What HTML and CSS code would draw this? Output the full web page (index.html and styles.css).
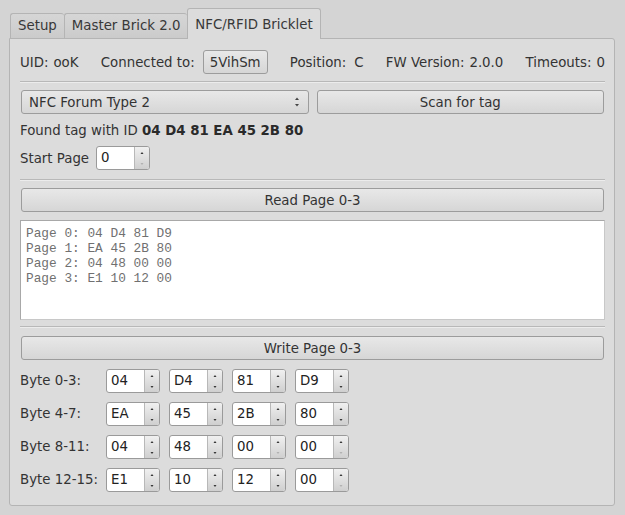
FILE: index.html
```html
<!DOCTYPE html>
<html>
<head>
<meta charset="utf-8">
<link rel="stylesheet" href="styles.css">
</head>
<body>
<div class="window">
  <div class="tabbar">
    <div class="tab">Setup</div>
    <div class="tab">Master Brick 2.0</div>
    <div class="tab active">NFC/RFID Bricklet</div>
  </div>
  <div class="pane">
    <div class="info-row">
      <div class="grp"><span>UID:</span><span>ooK</span></div>
      <div class="grp wide-gap"><span>Connected to:</span><span class="btn small">5VihSm</span></div>
      <div class="grp wide-gap"><span>Position:</span><span>C</span></div>
      <div class="grp"><span>FW Version:</span><span>2.0.0</span></div>
      <div class="grp"><span>Timeouts:</span><span>0</span></div>
    </div>
    <div class="sep first-sep"></div>
    <div class="row2">
      <div class="combo"><span>NFC Forum Type 2</span>
        <svg class="combo-arrows" width="8" height="14" viewBox="0 0 8 14"><path d="M2 5 L4 2.5 L6 5 Z" fill="#444"/><path d="M2 9 L4 11.5 L6 9 Z" fill="#444"/></svg>
      </div>
      <div class="btn">Scan for tag</div>
    </div>
    <div class="found">Found tag with ID <b>04 D4 81 EA 45 2B 80</b></div>
    <div class="start-row">
      <span>Start Page</span>
      <div class="spin"><span class="spin-val">0</span><span class="spin-btns"><svg width="14" height="22" viewBox="0 0 14 22"><path d="M5.5 7 L7 5 L8.5 7 Z" fill="#333"/><path d="M5.5 16 L7 18 L8.5 16 Z" fill="#b0b0b0"/></svg></span></div>
    </div>
    <div class="sep mid-sep"></div>
    <div class="btn full read-btn">Read Page 0-3</div>
    <div class="textarea">Page 0: 04 D4 81 D9
Page 1: EA 45 2B 80
Page 2: 04 48 00 00
Page 3: E1 10 12 00</div>
    <div class="sep low-sep"></div>
    <div class="btn full write-btn">Write Page 0-3</div>
    <div class="bytes">
      <span class="blabel">Byte 0-3:</span>
      <div class="spin"><span class="spin-val">04</span><span class="spin-btns"><svg width="14" height="22" viewBox="0 0 14 22"><path d="M5.5 7 L7 5 L8.5 7 Z" fill="#333"/><path d="M5.5 16 L7 18 L8.5 16 Z" fill="#333"/></svg></span></div>
      <div class="spin"><span class="spin-val">D4</span><span class="spin-btns"><svg width="14" height="22" viewBox="0 0 14 22"><path d="M5.5 7 L7 5 L8.5 7 Z" fill="#333"/><path d="M5.5 16 L7 18 L8.5 16 Z" fill="#333"/></svg></span></div>
      <div class="spin"><span class="spin-val">81</span><span class="spin-btns"><svg width="14" height="22" viewBox="0 0 14 22"><path d="M5.5 7 L7 5 L8.5 7 Z" fill="#333"/><path d="M5.5 16 L7 18 L8.5 16 Z" fill="#333"/></svg></span></div>
      <div class="spin"><span class="spin-val">D9</span><span class="spin-btns"><svg width="14" height="22" viewBox="0 0 14 22"><path d="M5.5 7 L7 5 L8.5 7 Z" fill="#333"/><path d="M5.5 16 L7 18 L8.5 16 Z" fill="#333"/></svg></span></div>

      <span class="blabel">Byte 4-7:</span>
      <div class="spin"><span class="spin-val">EA</span><span class="spin-btns"><svg width="14" height="22" viewBox="0 0 14 22"><path d="M5.5 7 L7 5 L8.5 7 Z" fill="#333"/><path d="M5.5 16 L7 18 L8.5 16 Z" fill="#333"/></svg></span></div>
      <div class="spin"><span class="spin-val">45</span><span class="spin-btns"><svg width="14" height="22" viewBox="0 0 14 22"><path d="M5.5 7 L7 5 L8.5 7 Z" fill="#333"/><path d="M5.5 16 L7 18 L8.5 16 Z" fill="#333"/></svg></span></div>
      <div class="spin"><span class="spin-val">2B</span><span class="spin-btns"><svg width="14" height="22" viewBox="0 0 14 22"><path d="M5.5 7 L7 5 L8.5 7 Z" fill="#333"/><path d="M5.5 16 L7 18 L8.5 16 Z" fill="#333"/></svg></span></div>
      <div class="spin"><span class="spin-val">80</span><span class="spin-btns"><svg width="14" height="22" viewBox="0 0 14 22"><path d="M5.5 7 L7 5 L8.5 7 Z" fill="#333"/><path d="M5.5 16 L7 18 L8.5 16 Z" fill="#333"/></svg></span></div>

      <span class="blabel">Byte 8-11:</span>
      <div class="spin"><span class="spin-val">04</span><span class="spin-btns"><svg width="14" height="22" viewBox="0 0 14 22"><path d="M5.5 7 L7 5 L8.5 7 Z" fill="#333"/><path d="M5.5 16 L7 18 L8.5 16 Z" fill="#333"/></svg></span></div>
      <div class="spin"><span class="spin-val">48</span><span class="spin-btns"><svg width="14" height="22" viewBox="0 0 14 22"><path d="M5.5 7 L7 5 L8.5 7 Z" fill="#333"/><path d="M5.5 16 L7 18 L8.5 16 Z" fill="#333"/></svg></span></div>
      <div class="spin"><span class="spin-val">00</span><span class="spin-btns"><svg width="14" height="22" viewBox="0 0 14 22"><path d="M5.5 7 L7 5 L8.5 7 Z" fill="#333"/><path d="M5.5 16 L7 18 L8.5 16 Z" fill="#b0b0b0"/></svg></span></div>
      <div class="spin"><span class="spin-val">00</span><span class="spin-btns"><svg width="14" height="22" viewBox="0 0 14 22"><path d="M5.5 7 L7 5 L8.5 7 Z" fill="#333"/><path d="M5.5 16 L7 18 L8.5 16 Z" fill="#b0b0b0"/></svg></span></div>

      <span class="blabel">Byte 12-15:</span>
      <div class="spin"><span class="spin-val">E1</span><span class="spin-btns"><svg width="14" height="22" viewBox="0 0 14 22"><path d="M5.5 7 L7 5 L8.5 7 Z" fill="#333"/><path d="M5.5 16 L7 18 L8.5 16 Z" fill="#333"/></svg></span></div>
      <div class="spin"><span class="spin-val">10</span><span class="spin-btns"><svg width="14" height="22" viewBox="0 0 14 22"><path d="M5.5 7 L7 5 L8.5 7 Z" fill="#333"/><path d="M5.5 16 L7 18 L8.5 16 Z" fill="#333"/></svg></span></div>
      <div class="spin"><span class="spin-val">12</span><span class="spin-btns"><svg width="14" height="22" viewBox="0 0 14 22"><path d="M5.5 7 L7 5 L8.5 7 Z" fill="#333"/><path d="M5.5 16 L7 18 L8.5 16 Z" fill="#333"/></svg></span></div>
      <div class="spin"><span class="spin-val">00</span><span class="spin-btns"><svg width="14" height="22" viewBox="0 0 14 22"><path d="M5.5 7 L7 5 L8.5 7 Z" fill="#333"/><path d="M5.5 16 L7 18 L8.5 16 Z" fill="#b0b0b0"/></svg></span></div>
    </div>
  </div>
</div>
</body>
</html>
```

FILE: styles.css
```css
html, body {
  margin: 0;
  padding: 0;
  background: #d4d4d4;
  width: 625px;
  height: 515px;
  overflow: hidden;
}
body {
  font-family: "DejaVu Sans", sans-serif;
  font-size: 13.33px;
  color: #333333;
}
.window {
  padding: 9px 10px 0 9px;
}
.tabbar {
  display: flex;
  align-items: flex-end;
  height: 29px;
  padding-left: 1px;
}
.tab {
  height: 24px;
  line-height: 24px;
  padding: 0 7px;
  background: linear-gradient(#d6d6d6, #cbcbcb);
  border: 1px solid #b4b4b4;
  border-bottom: none;
  border-right: none;
  border-radius: 3px 3px 0 0;
  color: #383838;
}
.tab.active {
  height: 30px;
  line-height: 31px;
  background: #dcdcdc;
  border-right: 1px solid #b4b4b4;
  margin-bottom: -1px;
  position: relative;
  z-index: 1;
  padding: 0 7px;
}
.pane {
  background: #dcdcdc;
  border: 1px solid #b4b4b4;
  border-radius: 0 3px 3px 3px;
  padding: 11px 9px 13px 10px;
  display: flex;
  flex-direction: column;
}
.info-row {
  display: flex;
  justify-content: space-between;
  align-items: center;
  height: 24px;
}
.grp {
  display: flex;
  align-items: center;
  gap: 5px;
}
.grp.wide-gap {
  gap: 8px;
}
.btn {
  display: flex;
  align-items: center;
  justify-content: center;
  height: 22px;
  border: 1px solid #9c9c9c;
  border-radius: 3px;
  background: linear-gradient(#e8e8e8, #d6d6d6);
  color: #333;
  box-sizing: content-box;
}
.btn.small {
  padding: 0 6px;
}
.sep {
  height: 1px;
  border-top: 1px solid #b8b8b8;
  background: #ececec;
}
.first-sep { margin-top: 7px; }
.row2 {
  margin-top: 7px;
  display: grid;
  grid-template-columns: 1fr 1fr;
  column-gap: 8px;
  height: 24px;
  padding: 0 1px;
}
.combo {
  display: flex;
  align-items: center;
  justify-content: space-between;
  height: 22px;
  padding: 0 7px 0 7px;
  border: 1px solid #9c9c9c;
  border-radius: 3px;
  background: linear-gradient(#e8e8e8, #d6d6d6);
}
.combo-arrows {
  display: block;
}
.found {
  margin-top: 8px;
  line-height: 17px;
}
.found b {
  font-weight: bold;
  color: #2a2a2a;
}
.start-row {
  margin-top: 7px;
  display: flex;
  align-items: center;
  gap: 7px;
  height: 24px;
}
.spin {
  display: flex;
  width: 52px;
  height: 22px;
  border: 1px solid #9a9a9a;
  border-radius: 3px;
  background: #ffffff;
  overflow: hidden;
}
.spin-val {
  flex: 1;
  line-height: 22px;
  padding-left: 4px;
  color: #222;
}
.spin-btns {
  width: 14px;
  border-left: 1px solid #b8b8b8;
  background: linear-gradient(#f0f0f0, #cfcfcf);
  display: flex;
}
.spin-btns svg { display: block; }
.mid-sep { margin-top: 9px; }
.read-btn { margin: 7px 1px 0 1px; }
.textarea {
  margin-top: 8px;
  height: 93px;
  background: #ffffff;
  border: 1px solid #a8a8a8;
  border-bottom-color: #c8c8c8;
  border-right-color: #c8c8c8;
  padding: 5px 0 0 5px;
  font-family: "Liberation Mono", monospace;
  font-size: 12.8px;
  line-height: 15px;
  color: #707070;
  white-space: pre;
}
.low-sep { margin-top: 6px; }
.write-btn { margin: 8px 1px 0 1px; }
.bytes {
  margin-top: 9px;
  display: grid;
  grid-template-columns: 76px 54px 54px 54px 54px;
  column-gap: 9px;
  row-gap: 9px;
  justify-content: start;
  align-items: center;
  padding-left: 1px;
}
.blabel {
  line-height: 24px;
  white-space: nowrap;
  margin-left: -1px;
}
```
